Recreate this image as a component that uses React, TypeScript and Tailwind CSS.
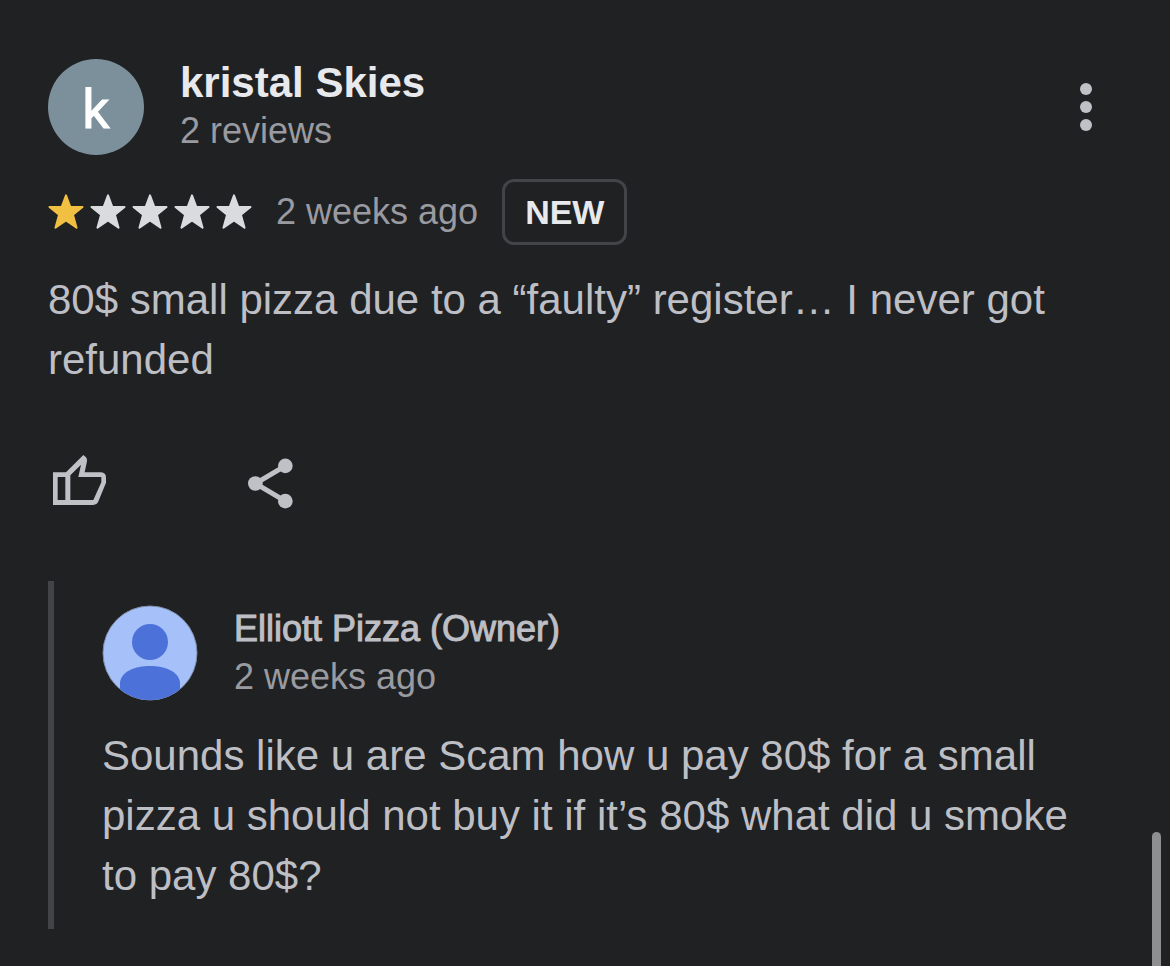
import type { ReactNode } from "react";

function Star({ filled }: { filled: boolean }) {
  return (
    <svg
      viewBox="0 3 108 106"
      className={
        filled ? "h-[35px] w-9 overflow-visible text-[#f1bf42]" : "h-[35px] w-9 overflow-visible text-[#dadbdf]"
      }
      fill="currentColor"
      stroke="currentColor"
      strokeWidth="6"
      strokeLinejoin="round"
      aria-hidden="true"
    >
      <path d="M54 4 L67 39 L104 39 L75 63 L86 102 L54 80 L22 102 L33 63 L4 39 L41 39 Z" />
    </svg>
  );
}

function Rating({ value }: { value: number }) {
  return (
    <div className="flex gap-1.5" role="img" aria-label={`${value} out of 5 stars`}>
      {[1, 2, 3, 4, 5].map((n) => (
        <Star key={n} filled={n <= value} />
      ))}
    </div>
  );
}

function IconButton({ label, children }: { label: string; children: ReactNode }) {
  return (
    <button
      type="button"
      aria-label={label}
      className="flex size-[72px] shrink-0 items-center justify-center rounded-full text-[#bfc1c7]"
    >
      {children}
    </button>
  );
}

function ThumbIcon() {
  return (
    <svg viewBox="69 45 159 150" className="h-[50px] w-[53px]" fill="currentColor" fillRule="evenodd">
      <path d="M69 97 H108 L160 45 L168 52 Q172 56 171 64 L164 97 H213 Q228 98 228 113 V128 L204 187 Q200 195 190 195 H69 Z M83 111 V180 H106 V111 Z M121 106 V180 H190 L214 127 V111 H145 L153 74 Z" />
    </svg>
  );
}

function ShareIcon() {
  return (
    <svg viewBox="653 41 135 170" className="h-[57px] w-[45px]" fill="currentColor">
      <path d="M765 82 L675 135 L765 188" fill="none" stroke="currentColor" strokeWidth="15" />
      <circle cx="765" cy="82" r="22" />
      <circle cx="675" cy="135" r="22" />
      <circle cx="765" cy="188" r="22" />
    </svg>
  );
}

function MoreIcon() {
  return (
    <svg viewBox="0 0 12 48" className="h-12 w-3" fill="currentColor">
      <circle cx="6" cy="6" r="6" />
      <circle cx="6" cy="24" r="6" />
      <circle cx="6" cy="42" r="6" />
    </svg>
  );
}

function OwnerAvatar() {
  return (
    <svg viewBox="0 0 96 96" className="size-24 shrink-0" aria-hidden="true">
      <defs>
        <clipPath id="owner-clip">
          <circle cx="48" cy="48" r="47" />
        </clipPath>
      </defs>
      <circle cx="48" cy="48" r="47" fill="#a6c1fa" stroke="#7f8da8" />
      <g clipPath="url(#owner-clip)" fill="#4c72da">
        <circle cx="48" cy="37" r="18" />
        <path d="M18 96 V77 C20 66 33 61 48 61 C63 61 76 66 78 77 V96 Z" />
      </g>
    </svg>
  );
}

export default function App() {
  return (
    <main className="relative min-h-screen bg-[#202123] px-12 pt-[59px] pb-9 font-['Liberation_Sans',Arial,sans-serif] text-[#bdbfc5]">
      <article>
        <header className="flex items-center">
          <div className="flex size-24 shrink-0 items-center justify-center rounded-full bg-[#7c909b] pt-1 font-['Roboto',sans-serif] text-[54px] text-white [-webkit-text-stroke:1px_currentColor]">
            k
          </div>
          <div className="ml-9 flex-1">
            <h1 className="text-[42px] leading-12 font-bold text-[#e8e9ed]">kristal Skies</h1>
            <p className="text-4xl leading-12 text-[#999ba1]">2 reviews</p>
          </div>
          <IconButton label="More options">
            <MoreIcon />
          </IconButton>
        </header>

        <div className="mt-6 flex items-center gap-6">
          <Rating value={1} />
          <span className="text-4xl text-[#999ba1]">2 weeks ago</span>
          <span className="flex h-[66px] items-center rounded-xl border-3 border-[#434447] px-5 text-[34px] font-bold text-[#e8e9ed]">
            NEW
          </span>
        </div>

        <p className="mt-[25px] text-[42px] leading-[60px]">
          80$ small pizza due to a “faulty” register… I never got refunded
        </p>

        <div className="mt-[54px] flex gap-[119px]">
          <div className="-ml-[5px]">
            <IconButton label="Like">
              <ThumbIcon />
            </IconButton>
          </div>
          <IconButton label="Share">
            <ShareIcon />
          </IconButton>
        </div>

        <section className="mt-[65px] border-l-6 border-[#434447] pt-6 pb-[23px] pl-12">
          <header className="flex items-center gap-9">
            <OwnerAvatar />
            <div>
              <h2 className="text-4xl leading-12 [-webkit-text-stroke:1px_currentColor]">Elliott Pizza (Owner)</h2>
              <p className="text-4xl leading-12 text-[#999ba1]">2 weeks ago</p>
            </div>
          </header>
          <p className="mt-[25px] pr-6 text-[42px] leading-[60px]">
            Sounds like u are Scam how u pay 80$ for a small pizza u should not buy it if it’s 80$ what did u smoke to
            pay 80$?
          </p>
        </section>
      </article>
      <div className="absolute right-[9px] bottom-0 h-[134px] w-[9px] rounded-t-full bg-[#8f8f92]" aria-hidden="true" />
    </main>
  );
}
